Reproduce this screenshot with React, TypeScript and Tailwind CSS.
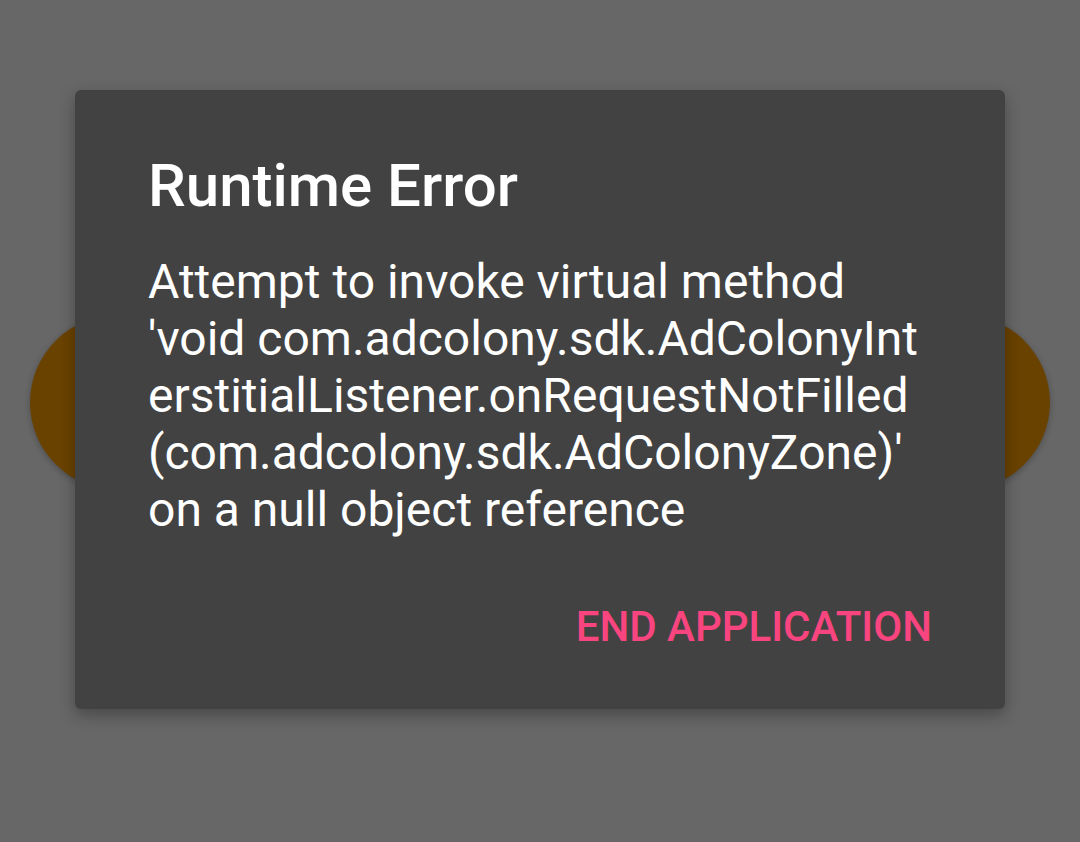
import React from "react";

const lines = [
  "Attempt to invoke virtual method",
  "'void com.adcolony.sdk.AdColonyInt",
  "erstitialListener.onRequestNotFilled",
  "(com.adcolony.sdk.AdColonyZone)'",
  "on a null object reference",
];

const App = () => {
  return (
    <div className="relative w-[1080px] h-[842px] overflow-hidden bg-[#676767] font-['Roboto',sans-serif]">
      <div className="pt-[315px] px-[30px]">
        <div className="h-[175px] rounded-full bg-[#6a4200] shadow-[0_2px_6px_rgba(0,0,0,0.25)]" />
      </div>

      <div className="absolute left-[75px] top-[90px] w-[930px] h-[619px] rounded-[6px] bg-[#424242] shadow-[0_6px_16px_rgba(0,0,0,0.3)] pt-[60px] px-[73px] flex flex-col">
        <h1 className="text-[60px] leading-[72px] font-medium text-white">
          Runtime Error
        </h1>
        <div className="mt-[31px] text-[48px] leading-[57px] text-white whitespace-nowrap">
          {lines.map((l) => (
            <div key={l}>{l}</div>
          ))}
        </div>
        <div className="mt-[64px] flex justify-end">
          <button className="text-[42px] leading-[50px] font-medium text-[#f8447f] uppercase">
            End Application
          </button>
        </div>
      </div>
    </div>
  );
};

export default App;
